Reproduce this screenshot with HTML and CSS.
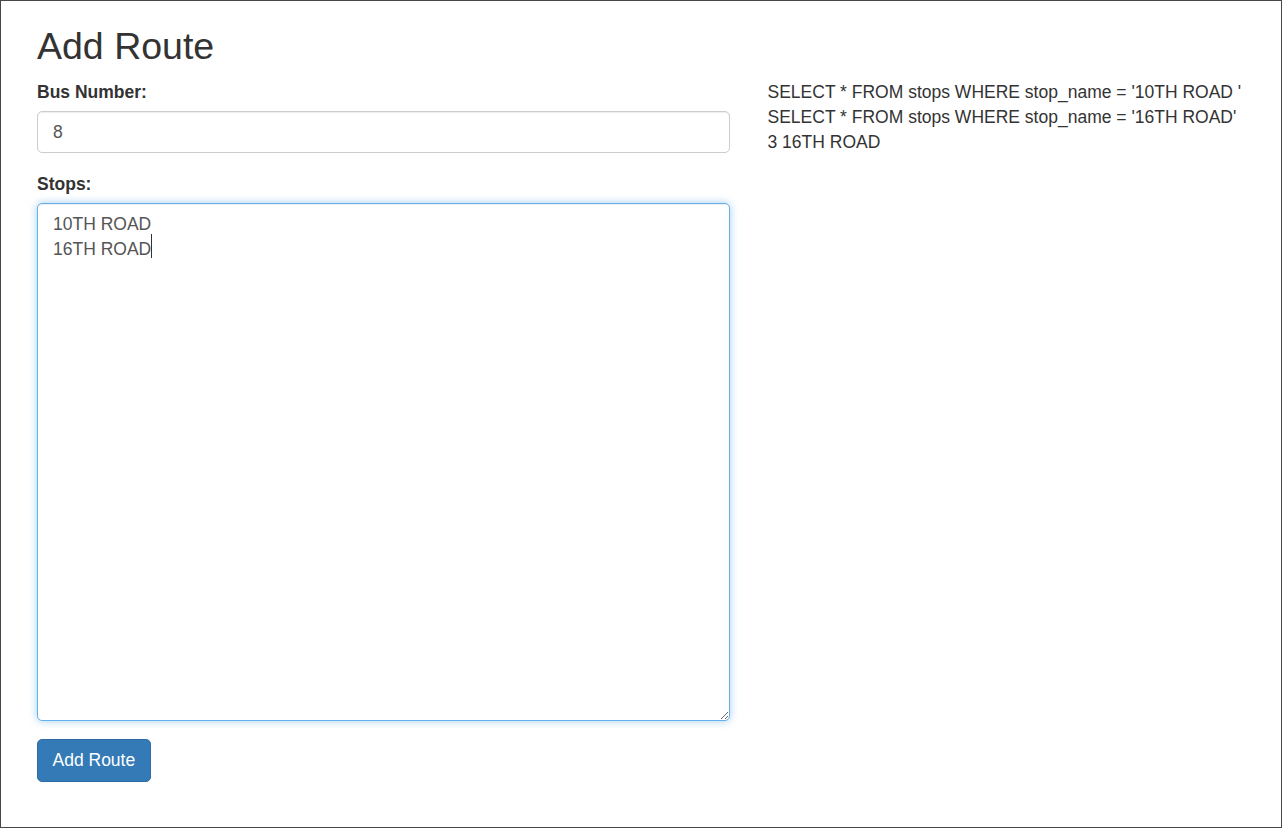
FILE: index.html
```html
<!DOCTYPE html>
<html>
<head>
<meta charset="utf-8">
<title>Add Route</title>
<link rel="stylesheet" href="styles.css">
</head>
<body>
<div class="frame">
  <h1 class="title">Add Route</h1>
  <div class="row">
    <form class="form-col">
      <div class="form-group">
        <label class="label" for="bus">Bus Number:</label>
        <input class="control" id="bus" type="text" value="8">
      </div>
      <div class="form-group">
        <label class="label" for="stops">Stops:</label>
        <div class="area-wrap">
          <textarea class="control area focused" id="stops">10TH ROAD
16TH ROAD</textarea>
          <span class="caret"></span>
        </div>
      </div>
      <button class="btn" type="button">Add Route</button>
    </form>
    <div class="output">
      <div>SELECT * FROM stops WHERE stop_name = '10TH ROAD '</div>
      <div>SELECT * FROM stops WHERE stop_name = '16TH ROAD'</div>
      <div>3 16TH ROAD</div>
    </div>
  </div>
</div>
</body>
</html>
```

FILE: styles.css
```css
html, body {
  margin: 0;
  padding: 0;
  background: #fff;
}
body {
  font-family: "Liberation Sans", Arial, Helvetica, sans-serif;
  font-size: 17.5px;
  line-height: 25px;
  color: #333;
}
.frame {
  box-sizing: border-box;
  width: 1282px;
  height: 828px;
  border: 1px solid #474747;
  padding: 0 36px;
  overflow: hidden;
}
.title {
  font-size: 37.5px;
  font-weight: 500;
  line-height: 1.1;
  margin: 25px 0 12.5px;
  color: #333;
}
.row {
  display: flex;
  gap: 37.5px;
}
.form-col {
  width: 693px;
  flex: none;
  margin: 0;
}
.form-group {
  margin-bottom: 18.75px;
}
.label {
  display: block;
  font-weight: bold;
  margin-bottom: 6px;
}
.control {
  display: block;
  box-sizing: border-box;
  width: 100%;
  height: 42.5px;
  padding: 7.5px 15px;
  font-family: "Liberation Sans", Arial, Helvetica, sans-serif;
  font-size: 17.5px;
  line-height: 25px;
  color: #555;
  background: #fff;
  border: 1px solid #ccc;
  border-radius: 5px;
  box-shadow: inset 0 1px 1px rgba(0,0,0,.075);
  outline: none;
  margin: 0;
}
.area-wrap {
  position: relative;
}
.area {
  height: 517.5px;
  resize: vertical;
}
.focused {
  border-color: #66afe9;
  box-shadow: inset 0 1px 1px rgba(0,0,0,.075), 0 0 8px rgba(102,175,233,.6);
}
.caret {
  position: absolute;
  left: 114px;
  top: 31px;
  width: 1px;
  height: 24px;
  background: #333;
}
.btn {
  display: inline-block;
  box-sizing: border-box;
  height: 42.5px;
  padding: 7.5px 14.5px;
  font-family: "Liberation Sans", Arial, Helvetica, sans-serif;
  font-size: 17.5px;
  line-height: 25px;
  color: #fff;
  background: #337ab7;
  border: 1px solid #2e6da4;
  border-radius: 5px;
  cursor: pointer;
}
.output {
  flex: 1;
}
```
